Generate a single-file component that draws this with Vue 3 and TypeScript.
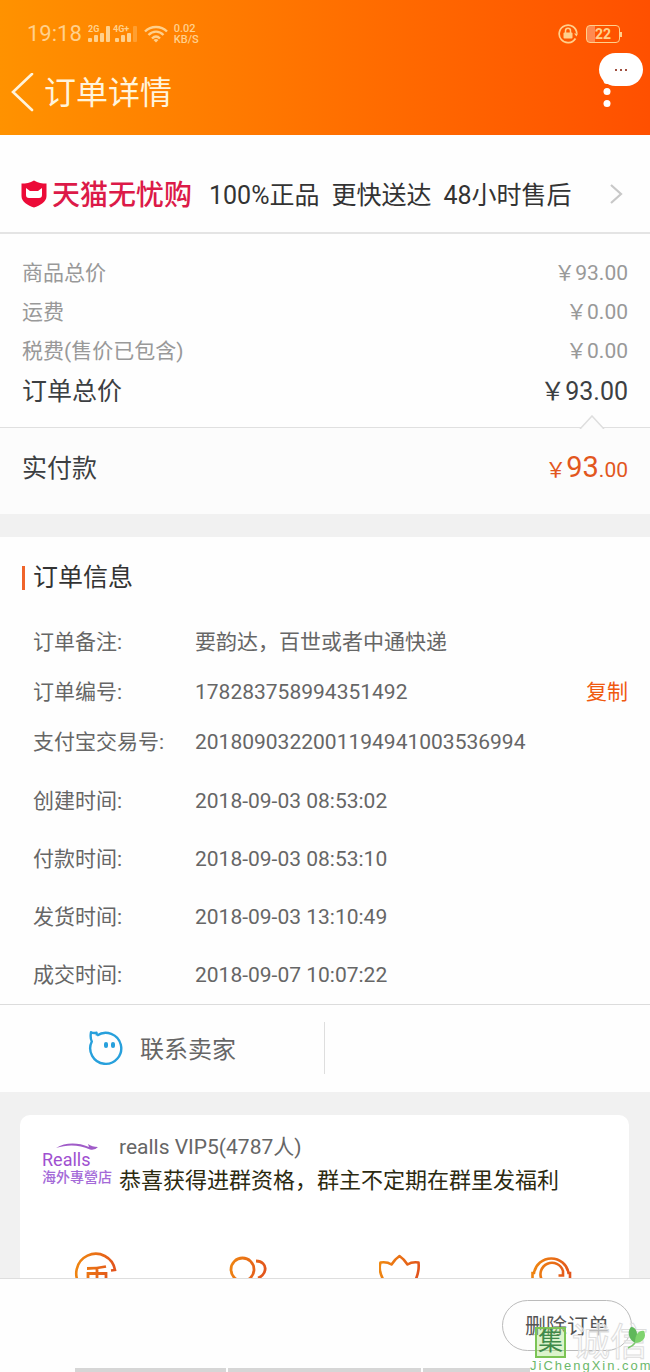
<script setup lang="ts">
interface PriceRow {
  label: string
  value: string
}
interface InfoRow extends PriceRow {
  copy?: boolean
}

const promises: string[] = ['100%正品', '更快送达', '48小时售后']

const prices: PriceRow[] = [
  { label: '商品总价', value: '￥93.00' },
  { label: '运费', value: '￥0.00' },
  { label: '税费(售价已包含)', value: '￥0.00' },
]

const orderRows: InfoRow[] = [
  { label: '订单备注:', value: '要韵达，百世或者中通快递' },
  { label: '订单编号:', value: '178283758994351492', copy: true },
  { label: '支付宝交易号:', value: '2018090322001194941003536994' },
]

const timeRows: InfoRow[] = [
  { label: '创建时间:', value: '2018-09-03 08:53:02' },
  { label: '付款时间:', value: '2018-09-03 08:53:10' },
  { label: '发货时间:', value: '2018-09-03 13:10:49' },
  { label: '成交时间:', value: '2018-09-07 10:07:22' },
]
</script>

<template>
  <div class="page">
    <header class="header">
      <div class="status">
        <span class="clock">19:18</span>
        <svg class="signal" width="50" height="20" viewBox="0 0 50 20" aria-hidden="true">
          <g fill="currentColor">
            <text x="0" y="8" class="net">2G</text>
            <rect x="0" y="14" width="4" height="4" rx="1" />
            <rect x="6" y="11" width="4" height="7" rx="1" />
            <rect x="12" y="9" width="4" height="9" rx="1" />
            <rect x="18" y="2" width="4" height="16" rx="1" />
            <text x="25" y="8" class="net">4G+</text>
            <rect x="27" y="14" width="4" height="4" rx="1" />
            <rect x="33" y="11" width="4" height="7" rx="1" />
            <rect x="39" y="9" width="4" height="9" rx="1" />
            <rect x="45" y="2" width="4" height="16" rx="1" opacity="0.35" />
          </g>
        </svg>
        <svg class="wifi" width="24" height="18" viewBox="0 0 24 18" aria-hidden="true">
          <g fill="none" stroke="currentColor" stroke-width="2.4">
            <path d="M1 6.5C7 0.5 17 0.5 23 6.5" />
            <path d="M4.5 10C9 5.5 15 5.5 19.5 10" />
            <path d="M8 13.5C10.5 11 13.5 11 16 13.5" />
          </g>
          <path d="M9.5 15a4 4 0 0 1 5 0L12 17.5z" fill="currentColor" />
        </svg>
        <span class="speed"><span>0.02</span><span>KB/S</span></span>
        <svg class="lock" width="20" height="20" viewBox="0 0 20 20" aria-hidden="true">
          <path d="M17.5 14.5A8.8 8.8 0 1 1 18.8 9.5" fill="none" stroke="currentColor" stroke-width="1.7" />
          <path d="M16 9.5h4l-1.5 3z" fill="currentColor" />
          <rect x="5.5" y="8.5" width="9" height="6" rx="1" fill="currentColor" />
          <path d="M7.5 9V6.8a2.5 2.5 0 0 1 5 0V9" fill="none" stroke="currentColor" stroke-width="1.5" />
        </svg>
        <span class="battery"><span>22</span></span>
      </div>
      <div class="titlebar">
        <button class="back" type="button" aria-label="返回">
          <svg width="24" height="40" viewBox="0 0 24 40">
            <path d="M22 1L3 19L22 37" fill="none" stroke="currentColor" stroke-width="2.6" stroke-linecap="round" />
          </svg>
        </button>
        <h1>订单详情</h1>
        <button class="more" type="button" aria-label="更多">
          <svg width="8" height="32" viewBox="0 0 8 32">
            <g fill="currentColor">
              <circle cx="4" cy="3.5" r="3.5" />
              <circle cx="4" cy="14.5" r="3.5" />
              <circle cx="4" cy="26.5" r="3.5" />
            </g>
          </svg>
        </button>
      </div>
      <button class="pill" type="button" aria-label="菜单"><i></i><i></i><i></i></button>
    </header>

    <a class="promo" href="#">
      <svg width="26" height="28" viewBox="0 0 26 28" aria-hidden="true">
        <path d="M13 0.5C17 3 21 3.5 25.500 3.5V16C25.5 22 19 25.5 13 27.5C7 25.5 0.5 22 0.5 16V3.5C5 3.5 9 3 13 0.5Z" fill="#ec0b38" />
        <path d="M5 8L9 11H17L21 8V15Q21 18 18 18H8Q5 18 5 15Z" fill="#fff" />
      </svg>
      <strong>天猫无忧购</strong>
      <span class="promises"><span v-for="p in promises" :key="p">{{ p }}</span></span>
      <svg class="chevron" width="14" height="24" viewBox="0 0 14 24" aria-hidden="true">
        <path d="M2 3L12 12L2 21" fill="none" stroke="#c8c8c8" stroke-width="2.2" />
      </svg>
    </a>

    <section class="prices">
      <div v-for="row in prices" :key="row.label" class="price-row">
        <span>{{ row.label }}</span><span class="amount">{{ row.value }}</span>
      </div>
      <div class="price-row total">
        <span>订单总价</span><span class="amount">￥93.00</span>
      </div>
    </section>

    <section class="paid">
      <svg class="notch" width="26" height="14" viewBox="0 0 26 14" aria-hidden="true">
        <path d="M1 14L13 1L25 14" fill="#fcfcfc" stroke="#dedede" stroke-width="1.5" />
      </svg>
      <span>实付款</span>
      <span class="sum">￥<b>93</b>.00</span>
    </section>

    <section class="info">
      <h2>订单信息</h2>
      <dl>
        <div v-for="row in orderRows" :key="row.label" class="info-row">
          <dt>{{ row.label }}</dt>
          <dd>{{ row.value }}</dd>
          <button v-if="row.copy" type="button" class="copy">复制</button>
        </div>
      </dl>
      <dl class="times">
        <div v-for="row in timeRows" :key="row.label" class="info-row">
          <dt>{{ row.label }}</dt>
          <dd>{{ row.value }}</dd>
        </div>
      </dl>
    </section>

    <section class="contact">
      <button type="button">
        <svg width="36" height="36" viewBox="0 0 36 36" aria-hidden="true">
          <path d="M9 5.500A15.500 15.500 0 1 1 3.800 11.500C2.500 9 2.500 5 3 2.200C5 3.500 6.500 3.200 8.500 2.800L9 5.500" fill="none" stroke="#27a0dc" stroke-width="2.4" stroke-linejoin="round" />
          <rect x="16" y="12" width="4" height="6" rx="2" fill="#27a0dc" />
          <rect x="23" y="12" width="4" height="6" rx="2" fill="#27a0dc" />
        </svg>
        <span>联系卖家</span>
      </button>
    </section>

    <section class="group">
      <article class="card">
        <div class="shop">
          <div class="logo">
            <svg width="44" height="8" viewBox="0 0 44 8" aria-hidden="true">
              <path d="M1 5C10 -0.5 22 -1 34 4L33 1Q37 4 43 4Q40 7.500 35 6.500C24 1.500 12 1.500 1 5Z" fill="#a05cc8" />
            </svg>
            <span class="latin">Realls</span>
            <span class="han">海外專營店</span>
          </div>
          <div class="shop-text">
            <p>realls VIP5(4787人)</p>
            <p class="notice">恭喜获得进群资格，群主不定期在群里发福利</p>
          </div>
        </div>
        <div class="tools">
          <svg width="0" height="0" class="defs" aria-hidden="true">
            <linearGradient id="warm" gradientUnits="userSpaceOnUse" x1="2" y1="0" x2="42" y2="10">
              <stop offset="0" stop-color="#f08a10" />
              <stop offset="1" stop-color="#e2541c" />
            </linearGradient>
          </svg>
          <button type="button" aria-label="淘金币">
            <svg width="44" height="44" viewBox="0 0 44 44">
              <g fill="none" stroke="url(#warm)" stroke-width="2.6">
                <path d="M7 34A19.500 19.500 0 1 1 41 18L37 18.500" />
                <path d="M13 16.500Q23 16.500 32 14.500M14 30V21.500H32V28Q32 30 28 30M23 16V34" stroke-width="2.800" />
              </g>
            </svg>
          </button>
          <button type="button" aria-label="好友">
            <svg width="44" height="44" viewBox="0 0 44 44">
              <g fill="none" stroke="url(#warm)" stroke-width="2.8">
                <circle cx="16.500" cy="17.500" r="11.500" />
                <path d="M30 9C36 9 40 13 39 18C38.500 22 35 25 32 26" />
              </g>
            </svg>
          </button>
          <button type="button" aria-label="会员">
            <svg width="44" height="44" viewBox="0 0 44 44">
              <path d="M5 29C1 22 0 15 1.500 10.500Q8 9.500 12.500 12.500Q16 7 20.500 4Q25 7 28.500 12.500Q33 9.500 39.500 10.500C40 15 39.500 22 36 29" fill="none" stroke="url(#warm)" stroke-width="2.6" stroke-linejoin="round" />
            </svg>
          </button>
          <button type="button" aria-label="客服">
            <svg width="44" height="44" viewBox="0 0 44 44">
              <g fill="none" stroke="url(#warm)" stroke-width="2.6">
                <path d="M1.500 27V21H3A17.500 17.500 0 0 1 37.500 21H39V27" />
                <path d="M11 28A11.500 11.500 0 1 1 32 19V23.500H27.500" />
              </g>
            </svg>
          </button>
        </div>
      </article>
    </section>

    <footer class="footer">
      <button type="button" class="delete">删除订单</button>
      <div class="segments"><i></i><i></i><i></i></div>
      <div class="mark">
        <div class="mark-top">
          <span class="seal">集</span>
          <span class="outline">诚信</span>
          <svg class="leaf" width="24" height="28" viewBox="0 0 24 28" aria-hidden="true">
            <path d="M6 3C12 3 14 11 10 19C3 15 2 7 6 3Z" fill="#5fb85a" />
            <path d="M10 19C10 10 14 6 19 7C22 13 18 19 10 19Z" fill="#7fd36e" />
            <path d="M10 19Q8 22 3 24" fill="none" stroke="#7fc870" stroke-width="1.500" />
          </svg>
        </div>
        <span class="domain">JiChengXin.com</span>
      </div>
    </footer>
  </div>
</template>

<style>
body {
  margin: 0;
  background: #fefefe;
}
</style>

<style scoped>
.page {
  font-family: Roboto, "Noto Sans CJK SC", sans-serif;
  font-size: 21px;
  line-height: 30px;
  color: #666;
  background: #fefefe;
}
.page * {
  box-sizing: border-box;
}
h1, h2, p, dl, dd {
  margin: 0;
  font-weight: 400;
}
button {
  padding: 0;
  border: 0;
  background: none;
  color: inherit;
  font: inherit;
}
svg {
  display: block;
  flex: none;
}
.header {
  position: relative;
  padding-bottom: 17px;
  background: linear-gradient(90deg, #ff9200, #ff5000);
  color: #fff4dc;
}
.status {
  display: flex;
  align-items: center;
  height: 67px;
  padding: 0 30px 0 27px;
  color: #ffd08c;
}
.clock {
  font-size: 22px;
}
.signal {
  margin-left: 6px;
}
.net {
  font-size: 9px;
  font-weight: 700;
}
.wifi {
  margin-left: 6px;
}
.speed {
  display: flex;
  flex-direction: column;
  margin-left: 6px;
  font-size: 11px;
  font-weight: 500;
  line-height: 11px;
}
.lock {
  margin-left: auto;
}
.battery {
  position: relative;
  width: 34px;
  height: 18px;
  margin-left: 8px;
  border: 1px solid currentColor;
  border-radius: 4px;
  background: linear-gradient(90deg, #ff8a50 24%, transparent 24%);
  font-size: 14px;
  font-weight: 700;
  line-height: 16px;
  text-align: center;
}
.battery::after {
  content: "";
  position: absolute;
  top: 6px;
  right: -3px;
  width: 2px;
  height: 5px;
  background: currentColor;
}
.titlebar {
  display: flex;
  align-items: center;
  height: 51px;
  padding: 0 39px 0 10px;
}
.titlebar h1 {
  margin-left: 10px;
  font-size: 32px;
  line-height: 48px;
}
.more {
  margin-left: auto;
  color: #fff;
}
.pill {
  position: absolute;
  top: 53px;
  right: 7px;
  display: flex;
  align-items: center;
  justify-content: center;
  gap: 3px;
  width: 44px;
  height: 33px;
  border-radius: 17px;
  background: #fff;
}
.pill i {
  width: 2px;
  height: 2px;
  background: #a05040;
}
.promo {
  display: flex;
  align-items: center;
  padding: 40px 27px 15px 21px;
  border-bottom: 2px solid #e4e4e4;
  color: #333;
  text-decoration: none;
  line-height: 42px;
}
.promo svg {
  margin-bottom: 4px;
}
.promo strong {
  margin-left: 5px;
  font-size: 28px;
  font-weight: 500;
  color: #dc1a48;
}
.promises {
  display: flex;
  gap: 12px;
  margin-left: 17px;
  font-size: 25px;
}
.promo .chevron {
  margin-left: auto;
}
.prices {
  padding: 20px 22px 14px;
  color: #999;
}
.price-row {
  display: flex;
  justify-content: space-between;
  line-height: 39px;
}
.total {
  font-size: 25px;
  line-height: 42px;
  color: #3c3f42;
}
.paid {
  position: relative;
  display: flex;
  align-items: center;
  justify-content: space-between;
  height: 87px;
  padding: 0 22px 5px;
  border-top: 1px solid #e0e0e0;
  background: #fcfcfc;
  font-size: 25px;
  color: #3c3f42;
}
.notch {
  position: absolute;
  top: -13px;
  right: 45px;
}
.sum {
  font-size: 21px;
  color: #e2571e;
}
.sum b {
  font-size: 29px;
  font-weight: 400;
}
.info {
  padding: 21px 22px 0;
  border-top: 23px solid #f1f1f1;
}
.info h2 {
  display: flex;
  align-items: center;
  height: 40px;
  margin-bottom: 19px;
  font-size: 25px;
  color: #333;
}
.info h2::before {
  content: "";
  width: 3px;
  height: 24px;
  margin-right: 8px;
  background: #f0642a;
}
.info-row {
  display: flex;
  align-items: center;
  height: 50px;
  padding-left: 11px;
}
.times {
  margin-top: 5px;
}
.times .info-row {
  height: 58px;
}
dt {
  width: 162px;
}
.copy {
  margin-left: auto;
  color: #f0590f;
}
.contact {
  display: grid;
  grid-template-columns: 1fr 1fr;
  padding: 17px 0 18px;
  border-top: 1px solid #dcdcdc;
  font-size: 24px;
}
.contact button {
  display: flex;
  align-items: center;
  justify-content: center;
  gap: 16px;
  height: 52px;
  border-right: 1px solid #dedede;
}
.contact span {
  padding-top: 3px;
}
.group {
  padding: 23px 21px 0 20px;
  background: #f1f1f1;
}
.card {
  border-radius: 10px 10px 0 0;
  background: #fff;
}
.shop {
  display: flex;
  padding: 15px 22px 0;
}
.logo {
  width: 77px;
  padding-top: 13px;
}
.logo svg {
  margin-left: 13px;
}
.latin,
.han {
  display: block;
  line-height: 17px;
  white-space: nowrap;
}
.latin {
  font-size: 18px;
  color: #a050d0;
}
.han {
  font-family: "Noto Sans CJK TC", sans-serif;
  font-size: 14px;
  font-weight: 500;
  color: #a46ad8;
}
.shop-text p {
  line-height: 34px;
}
.shop-text .notice {
  font-size: 22px;
  color: #2c2a10;
}
.tools {
  display: grid;
  grid-template-columns: repeat(4, 1fr);
  height: 26px;
  margin-top: 54px;
  overflow: hidden;
}
.tools button {
  display: flex;
  justify-content: center;
}
.defs {
  position: absolute;
}
.footer {
  position: relative;
  display: flex;
  flex-direction: column;
  align-items: flex-end;
  padding-top: 21px;
  border-top: 1px solid #dedede;
}
.delete {
  height: 51px;
  margin-right: 18px;
  padding: 0 22px;
  border: 1px solid #bbb;
  border-radius: 26px;
  color: #555;
}
.segments {
  display: grid;
  grid-template-columns: 151fr 192fr 107fr;
  gap: 2px;
  width: 70%;
  height: 4px;
  margin: 17px 120px 0 0;
}
.segments i {
  background: #d6d6d6;
}
.mark {
  position: absolute;
  right: 0;
  bottom: 0;
  width: 120px;
  pointer-events: none;
}
.mark-top {
  display: flex;
  align-items: center;
  height: 34px;
  padding-left: 5px;
}
.seal {
  width: 31px;
  height: 31px;
  border: 2px solid #7cc455;
  background: rgba(170, 230, 130, 0.4);
  font-size: 25px;
  line-height: 26px;
  text-align: center;
  color: #3f8a4a;
}
.outline {
  margin-left: 6px;
  font-size: 38px;
  line-height: 34px;
  white-space: nowrap;
  color: rgba(255, 255, 255, 0.6);
  -webkit-text-stroke: 1px #ddd;
}
.leaf {
  position: absolute;
  top: -1px;
  right: 1px;
}
.domain {
  display: block;
  font-family: "Liberation Sans", sans-serif;
  font-size: 13px;
  letter-spacing: 2px;
  line-height: 13px;
  white-space: nowrap;
  color: #6cb86a;
}
</style>
